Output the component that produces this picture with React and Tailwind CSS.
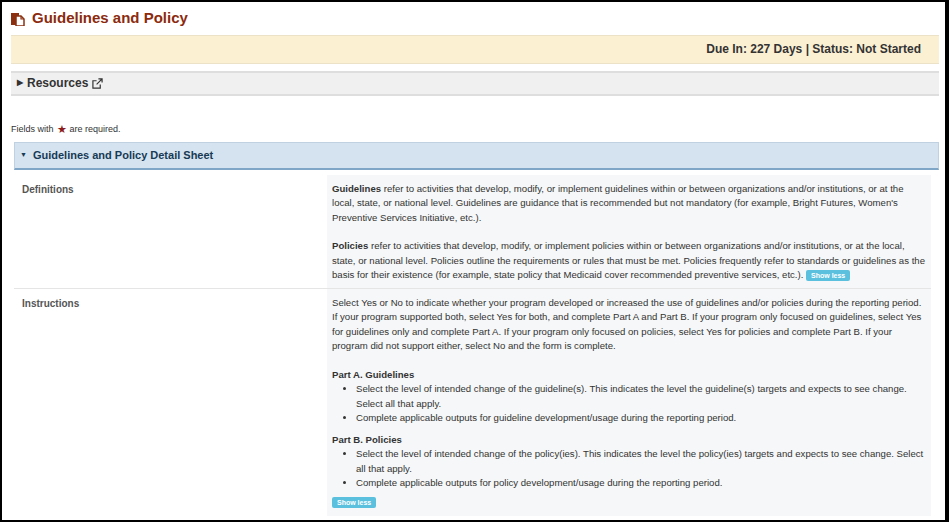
import React from "react";

const Btn = () => (
  <span className="inline-block bg-[#5bc0de] text-white text-[7px] leading-[11px] font-bold px-[5px] rounded-[2px] align-middle">Show less</span>
);

export default function App() {
  return (
    <div className="w-[949px] h-[522px] bg-white border-2 border-black border-r-[4px] box-border overflow-hidden text-[#333] text-[11px] leading-[14.5px]" style={{ fontFamily: "'Liberation Sans', Arial, sans-serif" }}>
      <div className="pl-[9px] pr-[6px]">
        {/* Title */}
        <div className="flex items-center h-[33px] gap-[7px]">
          <svg width="14" height="14" viewBox="0 0 14 14">
            <rect x="0" y="1" width="8" height="12" fill="#8b3010" />
            <path d="M5 4h5l3 3v7H5z" fill="white" stroke="#8b3010" strokeWidth="1.5" />
            <path d="M10 4v3h3" fill="none" stroke="#8b3010" strokeWidth="1.2" />
          </svg>
          <h1 className="text-[15px] font-bold text-[#8b2a0e]">Guidelines and Policy</h1>
        </div>
        {/* Due bar */}
        <div className="h-[29px] bg-[#fcf0d3] border-t border-b border-[#ece2c8] flex items-center justify-end pr-[18px] font-bold text-[12px] text-[#333]">
          Due In: 227 Days | Status: Not Started
        </div>
        {/* Resources */}
        <div className="mt-[7px] h-[25px] bg-[#f0f0f0] border-t-2 border-b-2 border-[#dedede] flex items-center pl-[6px] gap-[4px] font-bold text-[12px]">
          <span className="text-[8px]">▶</span>
          <span>Resources</span>
          <svg width="11" height="11" viewBox="0 0 12 12" fill="none" stroke="#333" strokeWidth="1.3">
            <path d="M9 7v4H1V3h4" />
            <path d="M7 1h4v4M11 1L5 7" />
          </svg>
        </div>
        <div className="mt-[26px] text-[9px] flex items-center gap-[3px]">
          Fields with <span className="text-[#8b1a1a] text-[11px]">★</span> are required.
        </div>
        {/* Section header */}
        <div className="mt-[5px] ml-[3px] h-[28px] bg-[#d4e3ef] border border-[#c0d2e2] border-b-2 border-b-[#7fa6c6] flex items-center pl-[5px] gap-[6px] font-bold text-[11px] text-[#183a55]">
          <span className="text-[7px]">▼</span>
          Guidelines and Policy Detail Sheet
        </div>
        {/* Rows */}
        <div className="ml-[3px] mr-[8px] mt-[5px]">
          <div className="flex border-b border-[#e5e5e5]">
            <div className="w-[313px] pl-[8px] pt-[8px] font-bold text-[10px] text-[#555]">Definitions</div>
            <div className="flex-1 bg-[#f6f7f8] px-[5px] pt-[7px] pb-[5px] text-[9.6px] leading-[14.5px]">
              <p><b>Guidelines</b> refer to activities that develop, modify, or implement guidelines within or between organizations and/or institutions, or at the local, state, or national level. Guidelines are guidance that is recommended but not mandatory (for example, Bright Futures, Women's Preventive Services Initiative, etc.).</p>
              <p className="mt-[14px]"><b>Policies</b> refer to activities that develop, modify, or implement policies within or between organizations and/or institutions, or at the local, state, or national level. Policies outline the requirements or rules that must be met. Policies frequently refer to standards or guidelines as the basis for their existence (for example, state policy that Medicaid cover recommended preventive services, etc.). <Btn /></p>
            </div>
          </div>
          <div className="flex">
            <div className="w-[313px] pl-[8px] pt-[8px] font-bold text-[10px] text-[#555]">Instructions</div>
            <div className="flex-1 bg-[#f6f7f8] px-[5px] pt-[7px] pb-[8px] text-[9.6px] leading-[14.5px]">
              <p>Select Yes or No to indicate whether your program developed or increased the use of guidelines and/or policies during the reporting period. If your program supported both, select Yes for both, and complete Part A and Part B. If your program only focused on guidelines, select Yes for guidelines only and complete Part A. If your program only focused on policies, select Yes for policies and complete Part B. If your program did not support either, select No and the form is complete.</p>
              <p className="mt-[14px] font-bold">Part A. Guidelines</p>
              <ul className="list-disc pl-[24px]">
                <li>Select the level of intended change of the guideline(s). This indicates the level the guideline(s) targets and expects to see change. Select all that apply.</li>
                <li>Complete applicable outputs for guideline development/usage during the reporting period.</li>
              </ul>
              <p className="mt-[7px] font-bold">Part B. Policies</p>
              <ul className="list-disc pl-[24px]">
                <li>Select the level of intended change of the policy(ies). This indicates the level the policy(ies) targets and expects to see change. Select all that apply.</li>
                <li>Complete applicable outputs for policy development/usage during the reporting period.</li>
              </ul>
              <div className="mt-[6px] leading-[11px]"><Btn /></div>
            </div>
          </div>
        </div>
      </div>
    </div>
  );
}
